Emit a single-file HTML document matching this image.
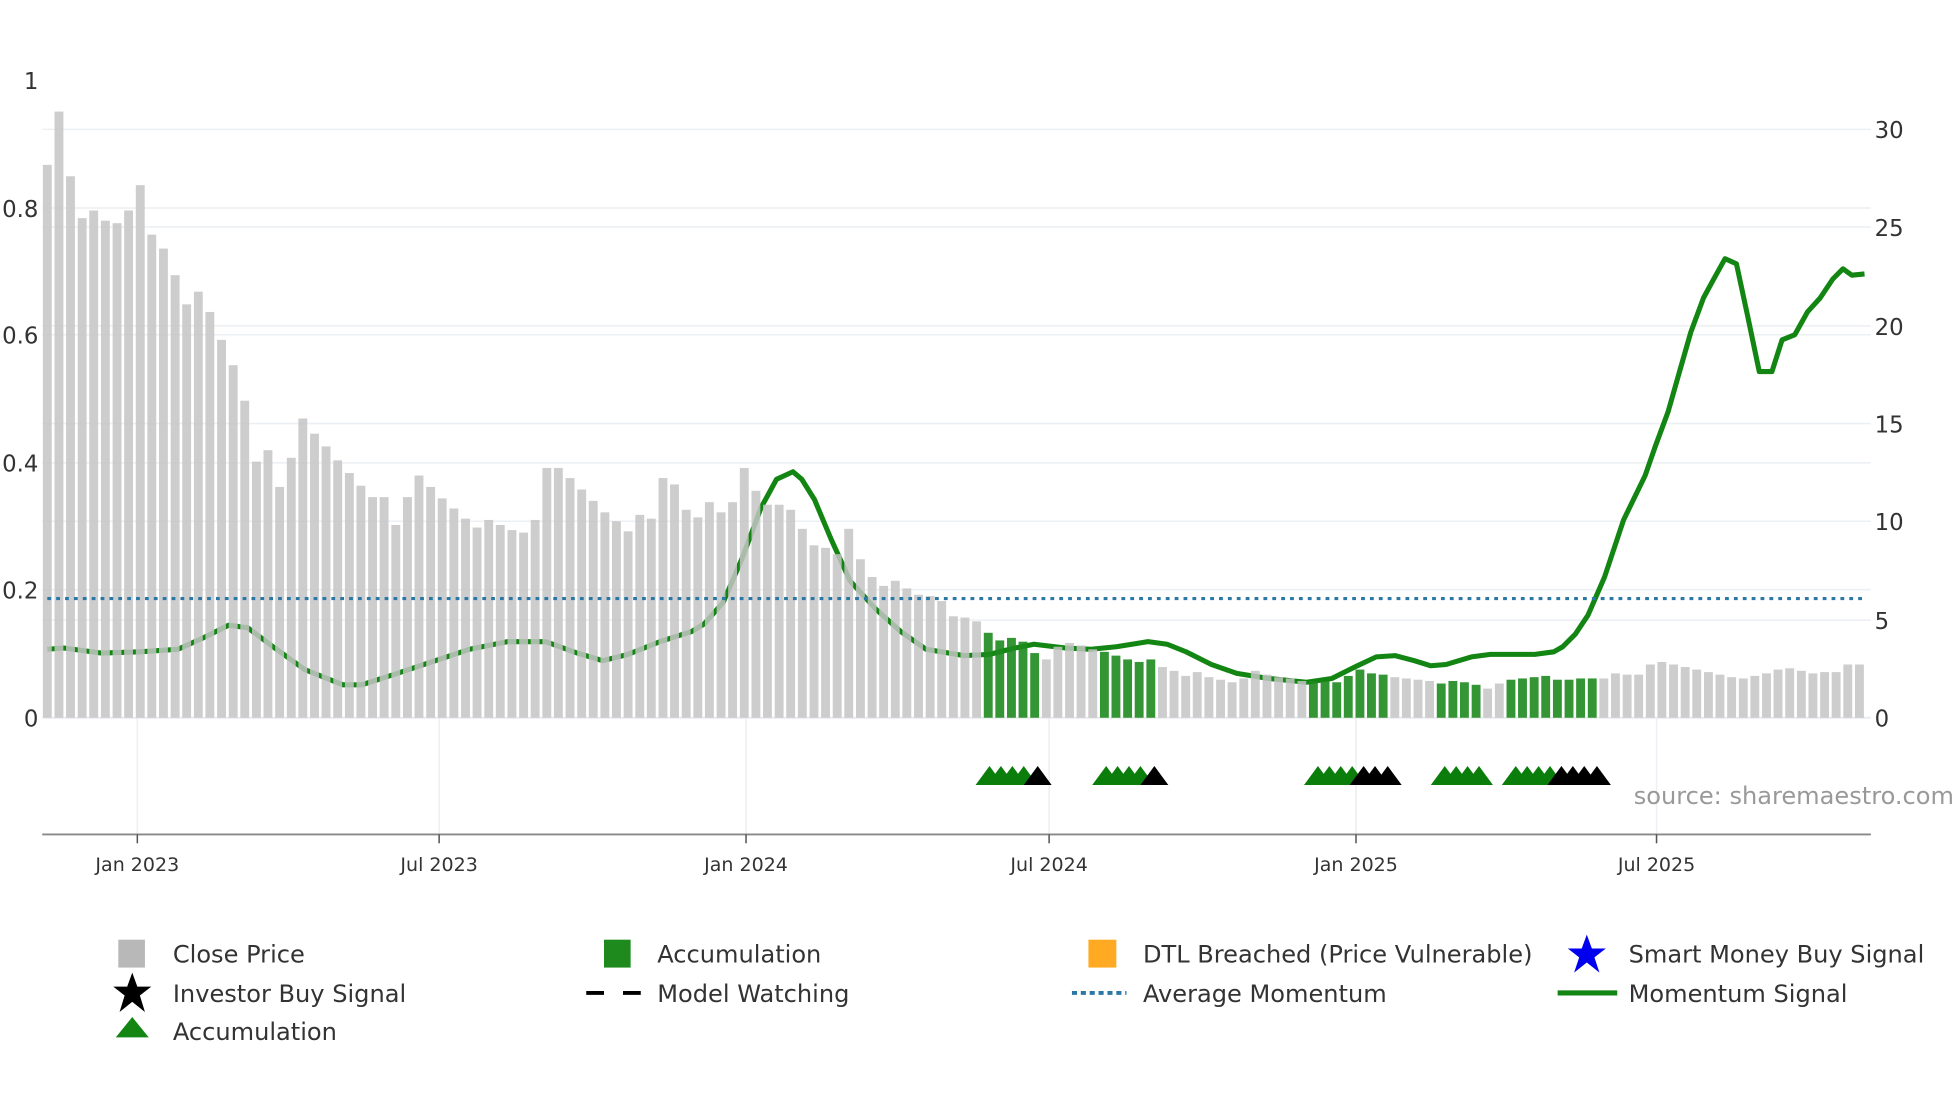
<!DOCTYPE html>
<html><head><meta charset="utf-8"><style>
html,body{margin:0;padding:0;background:#fff;}
svg{display:block;}
text{font-family:"DejaVu Sans","Liberation Sans",sans-serif;}
</style></head><body>
<svg id="s" width="1960" height="1102" viewBox="0 0 1545 869" xmlns="http://www.w3.org/2000/svg">
<rect width="1545" height="869" fill="#fff"/>
<g stroke="#eceff3" stroke-width="1.2">
<line x1="33" y1="465" x2="1475" y2="465"/><line x1="33" y1="365" x2="1475" y2="365"/>
<line x1="33" y1="264" x2="1475" y2="264"/><line x1="33" y1="164" x2="1475" y2="164"/>
<line x1="33" y1="489" x2="1475" y2="489"/><line x1="33" y1="411" x2="1475" y2="411"/>
<line x1="33" y1="334" x2="1475" y2="334"/><line x1="33" y1="257" x2="1475" y2="257"/>
<line x1="33" y1="179" x2="1475" y2="179"/><line x1="33" y1="102" x2="1475" y2="102"/>
<line x1="108" y1="566" x2="108" y2="658"/><line x1="346" y1="566" x2="346" y2="658"/>
<line x1="588" y1="566" x2="588" y2="658"/><line x1="827" y1="566" x2="827" y2="658"/>
<line x1="1069" y1="566" x2="1069" y2="658"/><line x1="1306" y1="566" x2="1306" y2="658"/>
</g>
<line x1="33" y1="566" x2="1475" y2="566" stroke="#e8ebef" stroke-width="1.5"/>
<path fill="none" stroke="#128512" stroke-width="4" stroke-linejoin="round" d="M37,512 L50,511 L80,515 L110,514 L140,512 L160,503 L180,493 L195,495 L215,510 L240,528 L270,540 L285,540 L310,532 L340,522 L370,512 L400,506 L430,506 L455,515 L475,521 L495,516 L520,506 L545,498 L555,492 L570,475 L585,440 L600,400 L612,378 L625,372 L632,378 L642,394 L655,425 L670,458 L690,480 L710,498 L730,512 L760,517 L780,516 L800,511 L815,508 L840,511 L860,512 L880,510 L905,506 L920,508 L935,514 L955,524 L975,531 L1000,535 L1030,538 L1050,535 L1070,525 L1085,518 L1100,517 L1115,521 L1128,525 L1140,524 L1160,518 L1175,516 L1210,516 L1225,514 L1232,510 L1242,500 L1252,485 L1265,455 L1280,410 L1297,375 L1305,352 L1315,325 L1325,290 L1333,262 L1343,235 L1350,222 L1360,204 L1369,208 L1378,250 L1387,293 L1397,293 L1405,268 L1415,264 L1425,246 L1435,235 L1445,220 L1453,212 L1460,217 L1470,216"/>
<g id="bars"></g>
<line x1="37" y1="472" x2="1472" y2="472" stroke="#2a78a6" stroke-width="2.5" stroke-dasharray="3,4"/>
<g id="tri"></g>
<line x1="33" y1="658" x2="1475" y2="658" stroke="#888" stroke-width="1.5"/>
<g stroke="#555" stroke-width="1.2">
<line x1="108" y1="658" x2="108" y2="665"/><line x1="346" y1="658" x2="346" y2="665"/>
<line x1="588" y1="658" x2="588" y2="665"/><line x1="827" y1="658" x2="827" y2="665"/>
<line x1="1069" y1="658" x2="1069" y2="665"/><line x1="1306" y1="658" x2="1306" y2="665"/>
</g>
<g font-size="15" fill="#333" text-anchor="middle">
<text x="108" y="687">Jan 2023</text><text x="346" y="687">Jul 2023</text>
<text x="588" y="687">Jan 2024</text><text x="827" y="687">Jul 2024</text>
<text x="1069" y="687">Jan 2025</text><text x="1306" y="687">Jul 2025</text>
</g>
<g font-size="18" fill="#333" text-anchor="end">
<text x="30" y="70">1</text><text x="30" y="171">0.8</text><text x="30" y="271">0.6</text>
<text x="30" y="372">0.4</text><text x="30" y="472">0.2</text><text x="30" y="573">0</text>
</g>
<g font-size="18" fill="#333">
<text x="1478" y="109">30</text><text x="1478" y="186">25</text><text x="1478" y="264">20</text>
<text x="1478" y="341">15</text><text x="1478" y="418">10</text><text x="1478" y="496">5</text><text x="1478" y="573">0</text>
</g>
<text x="1288" y="634" font-size="19" fill="#999">source: sharemaestro.com</text>
<g font-size="19" fill="#333">
<rect x="93" y="741" width="21" height="22" fill="#b8b8b8"/><text x="136" y="759">Close Price</text>
<rect x="476" y="741" width="21" height="22" fill="#1e8a1e"/><text x="518" y="759">Accumulation</text>
<rect x="858" y="741" width="22" height="22" fill="#ffaa22"/><text x="901" y="759">DTL Breached (Price Vulnerable)</text>
<polygon fill="#0000ee" points="1251,737 1255,748 1266,748 1257,755 1261,767 1251,759 1241,767 1245,755 1236,748 1247,748"/>
<text x="1284" y="759">Smart Money Buy Signal</text>
<polygon fill="#000" points="104,767 108,778 119,778 110,785 114,798 104,790 94,798 98,785 89,778 100,778"/>
<text x="136" y="790">Investor Buy Signal</text>
<line x1="462" y1="783" x2="505" y2="783" stroke="#000" stroke-width="3" stroke-dasharray="14,15"/>
<text x="518" y="790">Model Watching</text>
<line x1="845" y1="783" x2="888" y2="783" stroke="#2a78a6" stroke-width="3" stroke-dasharray="4,3"/>
<text x="901" y="790">Average Momentum</text>
<line x1="1228" y1="783" x2="1275" y2="783" stroke="#128512" stroke-width="4"/>
<text x="1284" y="790">Momentum Signal</text>
<polygon fill="#128512" points="104,802 117,818 91,818"/>
<text x="136" y="820">Accumulation</text>
</g>
</svg>
<script>
var tops=[130,88,139,172,166,174,176,166,146,185,196,217,240,230,246,268,288,316,364,355,384,361,330,342,352,363,373,383,392,392,414,392,375,384,393,401,409,416,410,414,418,420,410,369,369,377,386,395,404,411,419,406,409,377,382,402,408,396,404,396,369,387,398,398,402,417,430,432,437,417,441,455,462,458,464,469,470,474,486,487,490,
499,505,503,506,515,520,510,507,509,512,514,517,520,522,520,
526,529,533,530,534,536,538,535,529,532,534,535,537,
537,537,538,533,528,531,532,534,535,536,537,539,537,538,540,543,539,
536,535,534,533,536,536,535,535,
535,531,532,532,524,522,524,526,528,530,532,534,535,533,531,528,527,529,531,530,530,524,524];
var green=function(i){return (i>=81&&i<=85)||(i>=91&&i<=95)||(i>=109&&i<=115)||(i>=120&&i<=123)||(i>=126&&i<=133);};
var ns="http://www.w3.org/2000/svg",g=document.getElementById("bars"),h="";
for(var i=0;i<tops.length;i++){var x=37+i*9.16-3.5;
h+='<rect x="'+x.toFixed(1)+'" y="'+tops[i]+'" width="7" height="'+(566-tops[i])+'" fill="'+(green(i)?'#1e8a1e':'#c4c4c4')+'" fill-opacity="'+(green(i)?0.9:0.85)+'"/>';}
g.innerHTML=h;
var gr=[780,789,798,807,872,881,890,899,1039,1048,1057,1066,1139,1148,1157,1166,1195,1204,1213,1222];
var bl=[818,910,1075,1084,1094,1231,1240,1249,1259];
var t="";
gr.forEach(function(c){t+='<polygon fill="#0a7d0a" points="'+c+',604 '+(c+11)+',619 '+(c-11)+',619"/>';});
bl.forEach(function(c){t+='<polygon fill="#000" points="'+c+',604 '+(c+11)+',619 '+(c-11)+',619"/>';});
document.getElementById("tri").innerHTML=t;
</script>
</body></html>
